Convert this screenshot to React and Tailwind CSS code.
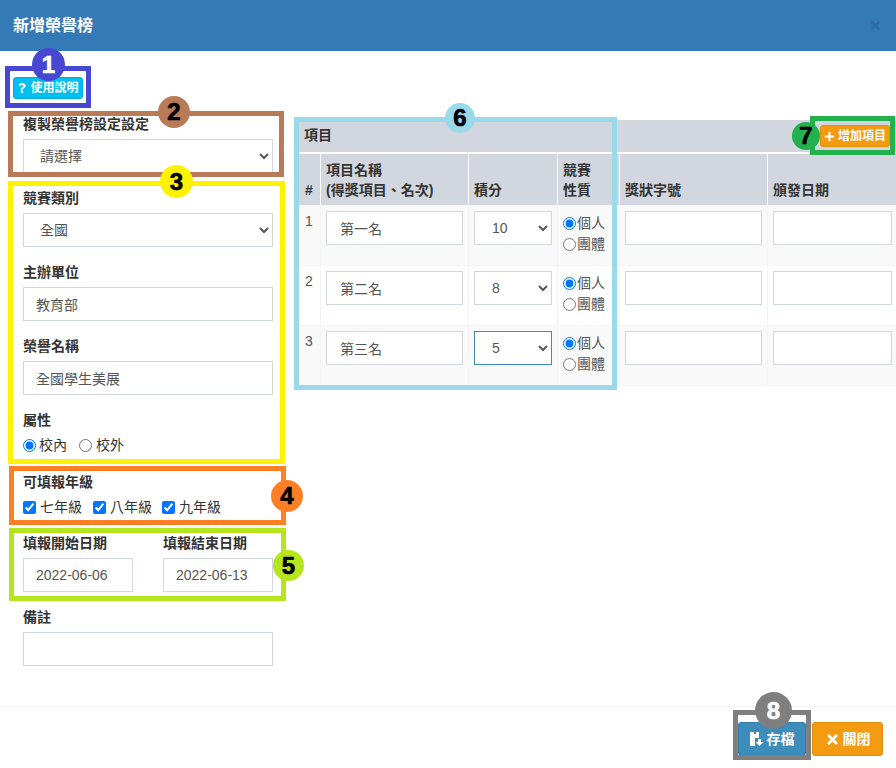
import React from "react";
import { FaQuestion, FaPlus, FaTimes } from "react-icons/fa";

const fontStack = "font-['Liberation_Sans','Noto_Sans_CJK_TC',sans-serif]";
const fieldBase = "block w-full h-[34px] border bg-white text-sm text-[#555] outline-none";
const fieldClass = `${fieldBase} border-[#d2d6de] px-3`;
const cellFieldClass = `${fieldBase} border-[#d2d6de] px-[13px]`;

// bootstrap style form group
function Field({ label, children, className = "mb-[15px]" }) {
  return (
    <div className={className}>
      <div className="mb-[5px] h-5 text-sm leading-5 font-bold text-[#333]">{label}</div>
      {children}
    </div>
  );
}

function Outline({ className }) {
  return <div className={`pointer-events-none absolute border-[5px] ${className}`} />;
}

function Badge({ className, text = "text-black", children }) {
  return (
    <div
      className={`absolute flex items-center justify-center rounded-full font-['Liberation_Sans',sans-serif] font-bold [-webkit-text-stroke:0.7px_currentColor] ${text} ${className}`}
    >
      {children}
    </div>
  );
}

const rows = [
  { id: 1, name: "第一名", score: "10", bg: "bg-[#f9f9f9]" },
  { id: 2, name: "第二名", score: "8", bg: "bg-white" },
  { id: 3, name: "第三名", score: "5", bg: "bg-[#f9f9f9]", focus: true },
];

const thClass =
  "border-x border-t-2 border-white px-[5px] pt-[5px] pb-[5px] align-bottom text-left text-sm leading-5 font-bold text-[#333]";
const tdClass = "border border-[#f4f4f4] px-[5px] pb-[5px] align-top text-sm text-[#555]";

function App() {
  return (
    <div className={`relative h-[768px] w-[896px] overflow-hidden bg-white ${fontStack}`}>
      <div className="flex h-[51px] items-center justify-between bg-[#337ab7] pr-[14px] pl-[13px]">
        <div className="text-base font-bold text-white">新增榮譽榜</div>
        <FaTimes className="text-[13px] text-[#2f6ca3]" />
      </div>

      <div className="h-[655px] pt-[26px] pl-[13px]">
        <button className="flex h-[22px] w-[70px] items-center justify-center gap-[3px] rounded-[3px] border border-[#00acd6] bg-[#00c0ef] text-xs font-bold text-white">
          <FaQuestion className="text-[10px]" />
          使用說明
        </button>

        <div className="mt-[15px] flex">
          <div className="ml-[10px] w-[250px] shrink-0">
            <Field label="複製榮譽榜設定設定">
              <select className={fieldClass} defaultValue="">
                <option value="">請選擇</option>
              </select>
            </Field>
            <Field label="競賽類別">
              <select className={fieldClass}>
                <option>全國</option>
              </select>
            </Field>
            <Field label="主辦單位">
              <input className={fieldClass} defaultValue="教育部" />
            </Field>
            <Field label="榮譽名稱">
              <input className={fieldClass} defaultValue="全國學生美展" />
            </Field>
            <Field label="屬性" className="mb-[17px]">
              <div className="flex h-[20px] items-center text-sm text-[#333]">
                <input type="radio" name="attr" defaultChecked className="m-0 mr-[3px] size-[13px]" />
                <span>校內</span>
                <input type="radio" name="attr" className="m-0 mr-[4px] ml-[12px] size-[13px]" />
                <span>校外</span>
              </div>
            </Field>
            <Field label="可填報年級" className="mb-[16px]">
              <div className="flex h-[20px] items-center text-sm text-[#333]">
                <input type="checkbox" defaultChecked className="m-0 mr-[4px] size-[13px]" />
                <span>七年級</span>
                <input type="checkbox" defaultChecked className="m-0 mr-[4px] ml-[11px] size-[13px]" />
                <span>八年級</span>
                <input type="checkbox" defaultChecked className="m-0 mr-[4px] ml-[10px] size-[13px]" />
                <span>九年級</span>
              </div>
            </Field>
            <div className="flex gap-[30px]">
              <div className="w-[110px]">
                <Field label="填報開始日期">
                  <input className={fieldClass} defaultValue="2022-06-06" />
                </Field>
              </div>
              <div className="w-[110px]">
                <Field label="填報結束日期">
                  <input className={fieldClass} defaultValue="2022-06-13" />
                </Field>
              </div>
            </div>
            <Field label="備註">
              <input className={fieldClass} />
            </Field>
          </div>

          <div className="mt-[6px] ml-[24px] w-[600px] shrink-0">
            <div className="flex h-[32px] items-center justify-between bg-[#d2d6de] pr-[7px] pl-[7px] text-sm font-bold text-[#333]">
              <span className="-mt-[2px]">項目</span>
              <button className="flex h-[22px] w-[70px] items-center justify-center gap-[3px] rounded-[3px] border border-[#e08e0b] bg-[#f39c12] text-xs font-bold text-white">
                <FaPlus className="text-[11px]" />
                增加項目
              </button>
            </div>
            <table className="w-[600px] table-fixed border-collapse">
              <colgroup>
                <col className="w-[23px]" />
                <col className="w-[148px]" />
                <col className="w-[89px]" />
                <col className="w-[62px]" />
                <col className="w-[148px]" />
                <col className="w-[130px]" />
              </colgroup>
              <thead>
                <tr className="h-[52px] bg-[#d2d6de]">
                  <th className={`${thClass} pl-[7px]`}>#</th>
                  <th className={thClass}>
                    項目名稱
                    <br />
                    (得獎項目、名次)
                  </th>
                  <th className={thClass}>積分</th>
                  <th className={thClass}>
                    競賽
                    <br />
                    性質
                  </th>
                  <th className={thClass}>獎狀字號</th>
                  <th className={thClass}>頒發日期</th>
                </tr>
              </thead>
              <tbody>
                {rows.map((row) => (
                  <tr key={row.id} className={`h-[60px] ${row.bg}`}>
                    <td className={`${tdClass} pt-[5px] pl-[7px]`}>{row.id}</td>
                    <td className={`${tdClass} pt-[5px]`}>
                      <input className={cellFieldClass} defaultValue={row.name} />
                    </td>
                    <td className={`${tdClass} pt-[5px]`}>
                      <select
                        className={`${fieldBase} px-[13px] ${row.focus ? "border-[#3c8dbc]" : "border-[#d2d6de]"}`}
                        defaultValue={row.score}
                      >
                        <option>{row.score}</option>
                      </select>
                    </td>
                    <td className={`${tdClass} pt-[7px]`}>
                      <label className="flex h-[21px] items-center gap-px">
                        <input type="radio" name={`kind-${row.id}`} defaultChecked className="m-0 size-[13px]" />
                        個人
                      </label>
                      <label className="flex h-[21px] items-center gap-px">
                        <input type="radio" name={`kind-${row.id}`} className="m-0 size-[13px]" />
                        團體
                      </label>
                    </td>
                    <td className={`${tdClass} pt-[5px]`}>
                      <input className={cellFieldClass} />
                    </td>
                    <td className={`${tdClass} pt-[5px]`}>
                      <input className={cellFieldClass} />
                    </td>
                  </tr>
                ))}
              </tbody>
            </table>
          </div>
        </div>
      </div>

      <div className="flex h-[62px] items-start justify-end gap-[6px] border-t border-[#f4f4f4] pt-[15px] pr-[13px]">
        <button className="flex h-[34px] w-[68px] items-center justify-center gap-[3px] rounded-[3px] border border-[#367fa9] bg-[#3c8dbc] text-sm font-bold text-white">
          <svg width="14" height="14" viewBox="0 0 14 14" fill="currentColor">
            <path d="M0 0h4v2h2V0h3v6H5v8H0z" />
            <path d="M8 7h3v3h2.500l-4 4-4-4H8z" />
          </svg>
          存檔
        </button>
        <button className="flex h-[34px] w-[71px] items-center justify-center gap-[3px] rounded-[3px] border border-[#e08e0b] bg-[#f39c12] text-sm font-bold text-white">
          <FaTimes className="text-[15px]" />
          關閉
        </button>
      </div>

      {/* annotation frames drawn on top of the screenshot */}
      <Outline className="top-[66px] left-[5px] h-[42px] w-[86px] border-[#4747d1]" />
      <Outline className="top-[111px] left-[8px] h-[66px] w-[276px] border-[#b97a57]" />
      <Outline className="top-[181px] left-[8px] h-[283px] w-[277px] border-[#fff200]" />
      <Outline className="top-[466px] left-[9px] h-[59px] w-[277px] border-[#ff7f27]" />
      <Outline className="top-[528px] left-[9px] h-[73px] w-[277px] border-[#b5e61d]" />
      <Outline className="top-[117px] left-[294px] h-[273px] w-[323px] border-[#99d9ea]" />
      <Outline className="top-[116px] left-[810px] h-[39px] w-[85px] border-[#22b14c]" />
      <Outline className="top-[710px] left-[733px] h-[50px] w-[78px] border-[#7f7f7f]" />

      <Badge className="top-[48px] left-[32px] size-[33px] bg-[#4747d1] text-2xl" text="text-white">1</Badge>
      <Badge className="top-[96px] left-[158px] size-[32px] bg-[#b97a57] text-2xl">2</Badge>
      <Badge className="top-[165px] left-[160px] size-[33px] bg-[#fff200] text-2xl">3</Badge>
      <Badge className="top-[480px] left-[271px] size-[32px] bg-[#ff7f27] text-2xl">4</Badge>
      <Badge className="top-[550px] left-[273px] size-[31px] bg-[#b5e61d] text-2xl">5</Badge>
      <Badge className="top-[103px] left-[445px] size-[30px] bg-[#99d9ea] text-2xl">6</Badge>
      <Badge className="top-[122px] left-[792px] size-[28px] bg-[#22b14c] text-2xl">7</Badge>
      <Badge className="top-[692px] left-[755px] size-[37px] bg-[#7f7f7f] text-2xl" text="text-white">8</Badge>
    </div>
  );
}

export default App;
